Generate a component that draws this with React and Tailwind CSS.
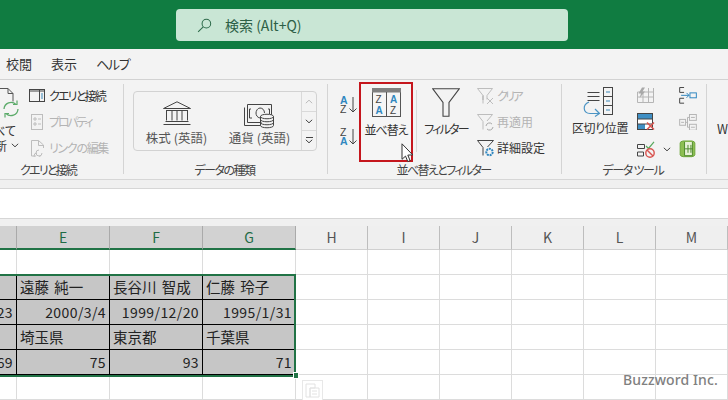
import React from 'react';

const FONT = "font-['Noto_Sans_CJK_JP','Noto_Sans',sans-serif] [font-feature-settings:'palt']";

function SearchIcon() {
  return (
    <svg width="15" height="15" viewBox="0 0 16 16" fill="none" stroke="#2d6a4a" strokeWidth="1.1">
      <circle cx="10" cy="6" r="4.6" />
      <path d="M6.6 9.4 1.2 14.8" />
    </svg>
  );
}

function RefreshAll() {
  return (
    <svg width="24" height="36" viewBox="0 0 24 36" fill="none">
      <path d="M-2 .5h10l5 5v8" stroke="#555" />
      <path d="M8 .5v5h5" stroke="#555" />
      <path d="M4 21a7 7 0 0 1 12-4.5M18 21a7 7 0 0 1-12 4.5" stroke="#5cab6a" strokeWidth="1.3" />
      <path d="M13 16.5h4v-4M9 25.500H5v4" stroke="#5cab6a" strokeWidth="1.2" />
    </svg>
  );
}

function QueryIcon() {
  return (
    <svg width="16" height="14" viewBox="0 0 16 14" fill="none" stroke="#444">
      <rect x=".5" y=".5" width="15" height="12" />
      <path d="M.5 2h15" />
      <path d="M10.500 1v11" />
      <path d="M12 5h2M12 7h2M12 9h2" stroke="#3a87b8" />
    </svg>
  );
}

function PropsIcon() {
  return (
    <svg width="12" height="16" viewBox="0 0 12 16" fill="none" stroke="#bdbdbd">
      <rect x=".5" y=".5" width="11" height="15" />
      <path d="M3 4h2v2H3zM3 9h2v2H3zM7 5h3M7 10h3" />
    </svg>
  );
}

function LinkDocIcon() {
  return (
    <svg width="14" height="17" viewBox="0 0 14 17" fill="none" stroke="#bdbdbd">
      <path d="M5 16H.5V.5h7l5 4.500v3" />
      <path d="M7.500.5v5h5" />
      <path d="M8 10a3 3 0 1 0 3 3M6 13a3 3 0 1 0 3 3" />
    </svg>
  );
}

function BankIcon() {
  return (
    <svg width="28" height="24" viewBox="0 0 28 24" fill="none" stroke="#444">
      <path d="M.5 7.500 14 .8l13.500 6.700z" />
      <path d="M3 9.500h22M3.500 19.500v-10M24.500 19.500v-10M9 19.500v-10M14 19.500v-10M19 19.500v-10M2.500 20.500h23M.5 23.500h27" />
    </svg>
  );
}

function CurrencyIcon() {
  return (
    <svg width="31" height="25" viewBox="0 0 31 25" fill="none" stroke="#444">
      <path d="M18 18.500H3.500V.5h24v11" />
      <path d="M.5 3.500v18h17" />
      <path d="M7 5h-1.500v9H8M24 5h1.500v5" />
      <path d="M16 14c-3-.5-4-3-4-5s1.500-5 4-5 4.500 2 4.500 5" />
      <path d="M16.500 12.500c0-3 13-3 13 0v9c0 3-13 3-13 0zM16.500 12.500c0 3 13 3 13 0M16.500 15.500c0 3 13 3 13 0M16.500 18.500c0 3 13 3 13 0" fill="#f3f3f3" />
    </svg>
  );
}

function SortMini({ top, bottom }) {
  return (
    <svg width="18" height="19" viewBox="0 0 18 19">
      <text x="0" y="8.500" fontSize="10.500" fontWeight={top === 'A' ? 700 : 400} fill={top === 'A' ? '#2f87c0' : '#444'} fontFamily="Liberation Sans">{top}</text>
      <text x="0" y="17.500" fontSize="10.500" fontWeight={bottom === 'A' ? 700 : 400} fill={bottom === 'A' ? '#2f87c0' : '#444'} fontFamily="Liberation Sans">{bottom}</text>
      <path d="M13 2v15M9.500 13.500 13 17l3.500-3.500" fill="none" stroke="#444" />
    </svg>
  );
}

function SortIcon() {
  return (
    <svg width="29" height="29" viewBox="0 0 29 29" fill="none">
      <rect x=".5" y=".5" width="28" height="28" stroke="#555" />
      <rect x="0" y="0" width="29" height="4.500" fill="#7f7f7f" />
      <path d="M14.500 4v25" stroke="#555" />
      <text x="3.500" y="15" fontSize="10" fill="#444" fontFamily="Liberation Sans">Z</text>
      <text x="3.500" y="26" fontSize="10" fontWeight="700" fill="#2f87c0" fontFamily="Liberation Sans">A</text>
      <text x="18" y="15" fontSize="10" fontWeight="700" fill="#2f87c0" fontFamily="Liberation Sans">A</text>
      <text x="18" y="26" fontSize="10" fill="#444" fontFamily="Liberation Sans">Z</text>
    </svg>
  );
}

function FunnelIcon() {
  return (
    <svg width="28" height="29" viewBox="0 0 28 29" fill="none" stroke="#444" strokeWidth="1.100">
      <path d="M.8.8h26.400L17 14.500v13.700h-6V14.500z" />
    </svg>
  );
}

function ClearIcon() {
  return (
    <svg width="18" height="17" viewBox="0 0 18 17" fill="none" stroke="#bdbdbd">
      <path d="M.5.5h15L10 7.500v4M6 12V7.500z" />
      <path d="M.5.5 6 7.500v8" />
      <path d="m10 10 6 6M16 10l-6 6" />
    </svg>
  );
}

function ReapplyIcon() {
  return (
    <svg width="18" height="17" viewBox="0 0 18 17" fill="none" stroke="#bdbdbd">
      <path d="M.5.5h15L10 7M.5.500 6 7.500v8" />
      <path d="M9 12a3.500 3.500 0 0 1 6-2M16 13a3.500 3.500 0 0 1-6 2" stroke="#a8a8a8" />
    </svg>
  );
}

function AdvancedIcon() {
  return (
    <svg width="18" height="17" viewBox="0 0 18 17" fill="none">
      <path d="M.5.5h16L10.500 7M.5.500 6 7.500v8" stroke="#444" />
      <circle cx="12.500" cy="12" r="3.200" stroke="#2f87c0" strokeWidth="2" strokeDasharray="2 .8" />
    </svg>
  );
}

function TextToColumnsIcon() {
  return (
    <svg width="34" height="30" viewBox="0 0 34 30" fill="none">
      <path d="M.5 5.500h12M.5 9.500h12M.5 13.500h12" stroke="#444" transform="translate(4 0)" />
      <rect x="20.500" y=".5" width="9" height="27" stroke="#444" />
      <path d="M20.500 9.500h9M20.500 18.500h9" stroke="#444" />
      <path d="M23 5h4M23 14h4M23 23h4" stroke="#3a87b8" />
      <path d="M6 15C-1 18 0 26 7 26.500h9M12 22l4.500 4.500-4.500 3" stroke="#4b94c4" strokeWidth="1.200" />
    </svg>
  );
}

function FlashFillIcon() {
  return (
    <svg width="17" height="16" viewBox="0 0 17 16" fill="none" stroke="#b5b5b5">
      <path d="M.5 15.500V5h16v10.500zM.5 10h16M6 5v10.500M11.500 1v14.500M16.500 1v4" />
      <path d="M5 .5 1.500 6.500H4L2.500 11 8 4.500H5.500L8 .5z" fill="#a8a8a8" stroke="none" />
    </svg>
  );
}

function RemoveDupIcon() {
  return (
    <svg width="21" height="18" viewBox="0 0 21 18" fill="none">
      <rect x=".5" y=".5" width="15" height="16" fill="#fff" stroke="#444" />
      <rect x="1" y="1" width="14" height="5" fill="#3f8fc4" />
      <rect x="1" y="11" width="7" height="5" fill="#3f8fc4" />
      <path d="M.5 6h15M.5 11h15" stroke="#444" />
      <path d="m10 9.500 7 7M17 9.500l-7 7" stroke="#d9534f" strokeWidth="1.500" />
    </svg>
  );
}

function ValidationIcon() {
  return (
    <svg width="19" height="17" viewBox="0 0 19 17" fill="none">
      <path d="M.5 3.500h7v4h-7zM.5 11h6v4h-6z" stroke="#444" />
      <path d="M9 5l2.500 2.500L17 .8" stroke="#5aa95f" strokeWidth="1.200" />
      <circle cx="13" cy="12" r="4.200" stroke="#d9534f" strokeWidth="1.400" fill="#f3f3f3" />
      <path d="m10 9 6 6" stroke="#d9534f" strokeWidth="1.400" />
    </svg>
  );
}

function ConsolidateIcon() {
  return (
    <svg width="18" height="17" viewBox="0 0 18 17" fill="none">
      <path d="M5 .5H.5v5H5M5 11.500H.5v5H5" stroke="#444" />
      <rect x="11" y="6" width="6.500" height="5" stroke="#2f87c0" />
      <path d="M2 8.500h8M7.500 6l2.500 2.500L7.500 11" stroke="#2f87c0" />
    </svg>
  );
}

function RelationIcon() {
  return (
    <svg width="18" height="17" viewBox="0 0 18 17" fill="none" stroke="#b5b5b5">
      <rect x=".5" y="5.500" width="6" height="6" />
      <rect x="10.500" y=".5" width="7" height="6" />
      <rect x="10.500" y="10.500" width="7" height="6" />
      <path d="M6.500 8.500h2M8.500 3.500v10h2M8.500 3.500h2M2 8.500h3M12 3.500h4M12 13.500h4" />
    </svg>
  );
}

function PowerPivotIcon() {
  return (
    <svg width="17" height="18" viewBox="0 0 17 18" fill="none">
      <path d="M1 3q0-1.500 3-2h9q3 .5 3 2v12q0 1.500-3 2H4q-3-.5-3-2z" fill="#8dbf52" stroke="#6da53a" />
      <path d="M5.500 2v14h8V2" fill="#e8f2d8" stroke="#4f8a2c" />
      <path d="M9 5v8M12 5v8M6 9h8" stroke="#4f8a2c" />
    </svg>
  );
}

function Chevron({ color = '#444' }) {
  return (
    <svg width="8" height="5" viewBox="0 0 8 5" fill="none" stroke={color}>
      <path d="m.8.8 3.200 3 3.200-3" />
    </svg>
  );
}

function Cursor() {
  return (
    <svg width="14" height="20" viewBox="0 0 14 20" fill="#fff" stroke="#333">
      <path d="M1 .8v15.500l3.500-3.200 2.300 5.500 2.300-1-2.300-5.500 4.900-.2z" />
    </svg>
  );
}

function SmallRow({ icon, label, disabled, track = '' }) {
  return (
    <div className="flex items-center h-[26px]">
      <div className="w-[20px] shrink-0 flex items-center">{icon}</div>
      <span className={`text-[12px] whitespace-nowrap ${track} ${disabled ? 'text-[#b4b4b4]' : 'text-[#333]'}`}>{label}</span>
    </div>
  );
}

function Group({ width, label, labelClass, children }) {
  return (
    <div className={`${width} shrink-0 mt-[4px] h-[90px] border-r border-[#d4d4d4] flex flex-col`}>
      <div className="h-[74px] flex">{children}</div>
      <div className={`mt-auto -mb-[4px] text-center text-[12px] leading-[16px] text-[#444] whitespace-nowrap ${labelClass}`}>{label}</div>
    </div>
  );
}

function Ribbon() {
  return (
    <div className="h-[100px] bg-[#f3f3f3] border-b border-[#d6d6d6] flex">
      <Group width="w-[124px]" label="クエリと接続" labelClass="tracking-[-1.8px] pr-[27px]">
        <div className="w-[24px] shrink-0 overflow-hidden flex flex-col items-end pt-[4px]">
          <RefreshAll />
          <div className="text-[12px] leading-[15px] whitespace-nowrap text-[#333] pr-[8px] -mt-[1px]">すべて</div>
          <div className="text-[12px] leading-[15px] whitespace-nowrap text-[#333] flex items-center gap-[4px] pr-[5px]">更新<Chevron /></div>
        </div>
        <div className="pl-[5px] -mt-[1px]">
          <SmallRow icon={<QueryIcon />} label="クエリと接続" track="tracking-[-1.8px]" />
          <SmallRow icon={<div className="pl-[2px]"><PropsIcon /></div>} label="プロパティ" track="tracking-[-2.2px]" disabled />
          <SmallRow icon={<div className="pl-[2px]"><LinkDocIcon /></div>} label="リンクの編集" track="tracking-[-1.3px]" disabled />
        </div>
      </Group>
      <Group width="w-[204px]" label="データの種類" labelClass="tracking-[-1.5px] pr-[2px]">
        <div className="ml-[9px] mt-[7px] w-[184px] h-[60px] border border-[#d2d2d2] rounded-[4px] flex text-[#555]">
          <div className="w-[168px] flex pl-[11px] gap-[20px]">
            <div className="w-[63px] flex flex-col items-center pt-[9px]">
              <BankIcon />
              <span className="text-[12.500px] leading-[16px] mt-[5px] whitespace-nowrap">株式 (英語)</span>
            </div>
            <div className="w-[63px] flex flex-col items-center pt-[12px]">
              <CurrencyIcon />
              <span className="text-[12.500px] leading-[16px] mt-[1px] whitespace-nowrap">通貨 (英語)</span>
            </div>
          </div>
          <div className="w-[15px] border-l border-[#d9d9d9] flex flex-col">
            <div className="h-[20px] flex items-center justify-center border-b border-[#d9d9d9]"><div className="rotate-180"><Chevron color="#bbb" /></div></div>
            <div className="h-[19px] flex items-center justify-center border-b border-[#d9d9d9]"><Chevron /></div>
            <div className="flex-1 flex flex-col items-center justify-center gap-[1px]">
              <div className="w-[7px] h-px bg-[#444]" />
              <Chevron />
            </div>
          </div>
        </div>
      </Group>
      <Group width="w-[234px]" label="並べ替えとフィルター" labelClass="tracking-[-1.6px] pr-[2px]">
        <div className="w-[31px] shrink-0 pl-[12px] pt-[11px] flex flex-col gap-[13px]">
          <SortMini top="A" bottom="Z" />
          <SortMini top="Z" bottom="A" />
        </div>
        <div className="w-[54px] h-[80px] -mt-[2px] shrink-0 border-2 border-[#c5161d] bg-[#f5f5f5] flex flex-col items-center pt-[4px]">
          <SortIcon />
          <span className="text-[12px] leading-[16px] mt-[5px] whitespace-nowrap tracking-[-1px] text-[#333]">並べ替え</span>
        </div>
        <div className="w-px h-[62px] bg-[#d9d9d9] mt-[6px] ml-[3px] shrink-0" />
        <div className="w-[52px] ml-[3px] shrink-0 flex flex-col items-center pt-[4px]">
          <FunnelIcon />
          <span className="text-[12px] leading-[16px] mt-[4px] whitespace-nowrap tracking-[-1.800px] text-[#333]">フィルター</span>
        </div>
        <div className="-mt-[1px] ml-[5px]">
          <SmallRow icon={<ClearIcon />} label="クリア" track="tracking-[-2.600px]" disabled />
          <SmallRow icon={<ReapplyIcon />} label="再適用" disabled />
          <SmallRow icon={<AdvancedIcon />} label="詳細設定" />
        </div>
      </Group>
      <Group width="w-[145px]" label="データ ツール" labelClass="tracking-[-1.3px] pr-[2px]">
        <div className="w-[65px] ml-[10px] shrink-0 flex flex-col items-start pt-[3px]">
          <div className="ml-[11px]"><TextToColumnsIcon /></div>
          <span className="text-[12px] leading-[16px] mt-[3px] whitespace-nowrap tracking-[-0.4px] text-[#333]">区切り位置</span>
        </div>
        <div className="w-[42px] shrink-0 flex flex-col pt-[3px] gap-[10px]">
          <FlashFillIcon />
          <RemoveDupIcon />
          <div className="flex items-center gap-[7px]"><ValidationIcon /><Chevron /></div>
        </div>
        <div className="flex flex-col pt-[3px] gap-[10px]">
          <ConsolidateIcon />
          <RelationIcon />
          <PowerPivotIcon />
        </div>
      </Group>
      <div className="pl-[10px] pt-[41px] text-[12.500px] leading-[16px] text-[#333]">W</div>
    </div>
  );
}

const COLS = [
  { name: '', w: 'w-[17px]', on: true },
  { name: 'E', w: 'w-[93px]', on: true },
  { name: 'F', w: 'w-[93px]', on: true },
  { name: 'G', w: 'w-[93px]', on: true },
  { name: 'H', w: 'w-[72px]' },
  { name: 'I', w: 'w-[72px]' },
  { name: 'J', w: 'w-[72px]' },
  { name: 'K', w: 'w-[72px]' },
  { name: 'L', w: 'w-[72px]' },
  { name: 'M', w: 'w-[72px]' },
];

const ROWS = [
  [['', ''], ['遠藤 純一', 'l'], ['長谷川 智成', 'l'], ['仁藤 玲子', 'l']],
  [['23', 'r'], ['2000/3/4', 'r'], ['1999/12/20', 'r'], ['1995/1/31', 'r']],
  [['', ''], ['埼玉県', 'l'], ['東京都', 'l'], ['千葉県', 'l']],
  [['69', 'r'], ['75', 'r'], ['93', 'r'], ['71', 'r']],
];

function HeaderRow() {
  return (
    <div className="flex h-[24px]">
      {COLS.map((c, i) => (
        <div
          key={i}
          className={`${c.w} shrink-0 border-r flex items-center justify-center text-[14px] ${
            c.on
              ? 'bg-[#d2d2d2] border-[#aaa] border-b-2 border-b-[#217346] text-[#1f6b45]'
              : 'bg-[#efefef] border-[#bdbdbd] border-b border-b-[#d0d0d0] text-[#555]'
          }`}
        >
          {c.name}
        </div>
      ))}
    </div>
  );
}

function GridRow({ cells }) {
  return (
    <div className="flex h-[25px]">
      {COLS.map((c, i) => {
        const cell = cells && cells[i];
        if (cell) {
          return (
            <div
              key={i}
              className={`${c.w} shrink-0 bg-[#c6c6c6] border-r border-b border-black flex items-center px-[3px] text-[#222] whitespace-nowrap [font-feature-settings:normal] ${
                cell[1] === 'r' ? 'justify-end text-[14px] tracking-[0.4px]' : 'text-[14.500px] [word-spacing:2px]'
              }`}
            >
              {cell[0]}
            </div>
          );
        }
        return <div key={i} className={`${c.w} shrink-0 border-r border-b border-[#dcdcdc]`} />;
      })}
    </div>
  );
}

export default function App() {
  return (
    <div className={`relative w-[728px] h-[400px] overflow-hidden bg-white ${FONT}`}>
      <div className="h-[49px] bg-[#107c41] pl-[176px] pt-[9px]">
        <div className="w-[392px] h-[32px] bg-[#c9e6d5] rounded-[4px] flex items-center pl-[21px] gap-[13px]">
          <SearchIcon />
          <span className="text-[14px] text-[#2d5f46]">検索 (Alt+Q)</span>
        </div>
      </div>
      <div className="h-[31px] bg-[#f3f3f3] border-b border-[#d2d2d2] flex items-center pl-[6px] gap-[19px] text-[13px] text-[#333]">
        <span>校閲</span>
        <span>表示</span>
        <span className="tracking-[-1.300px]">ヘルプ</span>
      </div>
      <Ribbon />
      <div className="h-[9px] bg-[#f0f0f0] border-b border-[#d6d6d6]" />
      <div className="h-[30px] bg-white border-b border-[#d6d6d6]" />
      <div className="h-[7px] bg-[#f0f0f0]" />
      <HeaderRow />
      <GridRow />
      {ROWS.map((r, i) => <GridRow key={i} cells={r} />)}
      <GridRow />

      {/* overlays */}
      <div className="absolute left-[-3px] top-[274px] w-[299px] h-[103px] border-2 border-[#217346]" />
      <div className="absolute left-[293px] top-[372px] w-[4px] h-[5px] bg-[#217346] border border-white box-content" />
      <div className="absolute left-[302px] top-[380px] w-[21px] h-[21px] border border-[#e8e8e8] bg-white flex items-center justify-center">
        <svg width="15" height="15" viewBox="0 0 15 15" fill="none" stroke="#e2e2e2">
          <path d="M1 1h9v4H5v9H1zM5 5h9v9H5zM7 8h5M7 11h5" />
        </svg>
      </div>
      <div className="absolute left-[401px] top-[143px]"><Cursor /></div>
      <div className="absolute left-[623px] top-[370px] text-[14px] leading-[20px] font-medium tracking-[0.1px] text-[#808080] font-['Noto_Sans',sans-serif]">Buzzword Inc.</div>
    </div>
  );
}
